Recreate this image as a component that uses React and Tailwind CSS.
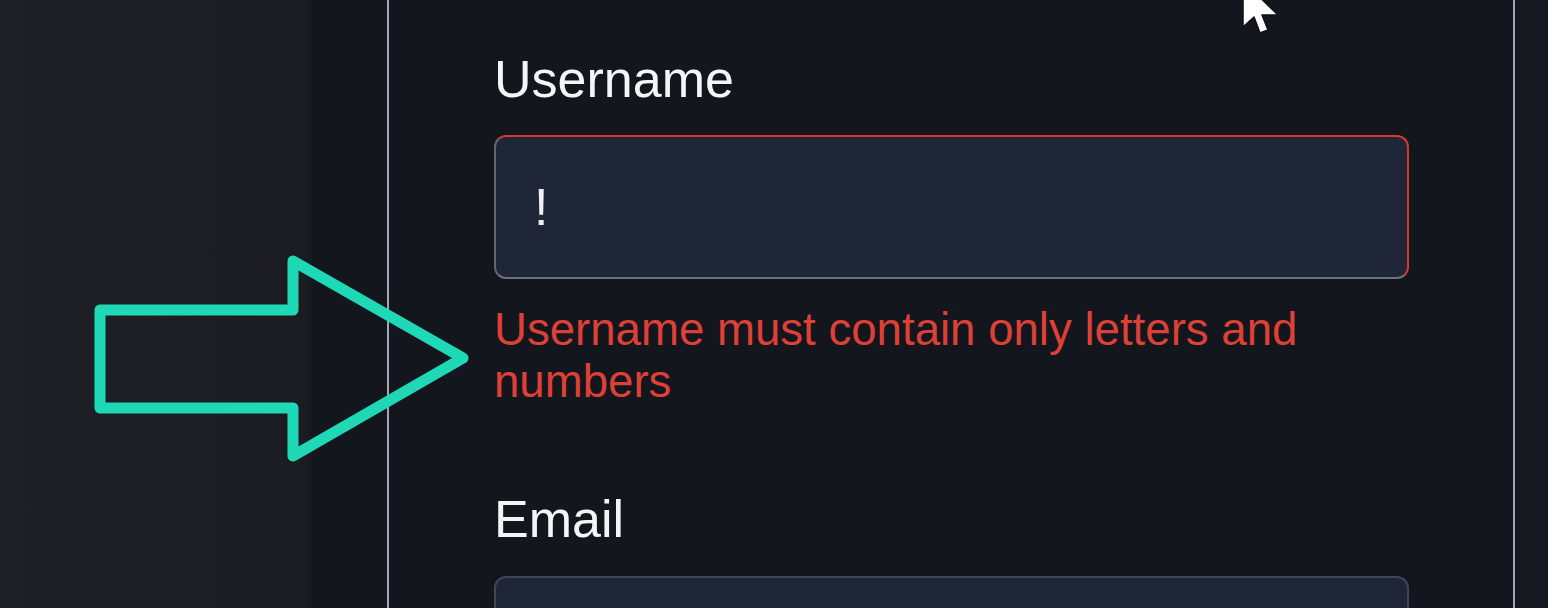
export default function App() {
  return (
    <div
      className="relative flex h-[608px] w-[1548px] overflow-hidden bg-[#161820]"
      style={{ fontFamily: '"Liberation Sans", Arial, sans-serif' }}
    >
      {/* dark backdrop left of the form */}
      <div className="w-[387px] shrink-0 bg-[linear-gradient(90deg,#1f2025_0%,#1c1e25_45%,#1b1c21_79%,#14161e_81%,#13161d_100%)]" />

      {/* form panel */}
      <div className="w-[1128px] shrink-0 border-x-2 border-[#a3a6ae] bg-[#14161d] pl-[105px] pr-[104px] pt-[49px]">
        <div className="w-[915px]">
          <label className="block text-[52px] leading-[60px] text-[#f4f5f7]">Username</label>
          <input
            readOnly
            value="!"
            className="mt-[26px] block h-[144px] w-full rounded-[12px] border-2 border-t-[#d8372d] border-r-[#d8372d] border-l-[#5f6573] border-b-[#6b7180] bg-[#1e2638] pl-[38px] text-[52px] text-[#eef0f3] outline-none"
          />
          <p className="mt-[25px] text-[45.6px] leading-[52px] text-[#dd4036]">
            Username must contain only letters and numbers
          </p>

          <label className="mt-[81px] block text-[52px] leading-[60px] text-[#f4f5f7]">Email</label>
          <div className="mt-[27px] h-[144px] w-full rounded-[12px] border-2 border-[#3f4656] bg-[#1e2638]" />
        </div>
      </div>

      <div className="flex-1" />

      {/* annotation arrow */}
      <svg className="pointer-events-none absolute left-0 top-0" width="520" height="520" viewBox="0 0 520 520">
        <polygon
          points="100,310 293,310 293,261 463,358 293,456 293,408 100,408"
          fill="none"
          stroke="#1fd9b6"
          strokeWidth="11"
          strokeLinejoin="round"
        />
      </svg>

      {/* mouse cursor */}
      <svg className="pointer-events-none absolute left-[1242px] top-[-20px]" width="42" height="60" viewBox="0 0 42 60">
        <polygon
          points="1,1 1,47 12,37 18,53 26,50 20,35 36,35"
          fill="#ffffff"
          stroke="#111"
          strokeWidth="1.5"
          strokeLinejoin="round"
        />
      </svg>
    </div>
  )
}
